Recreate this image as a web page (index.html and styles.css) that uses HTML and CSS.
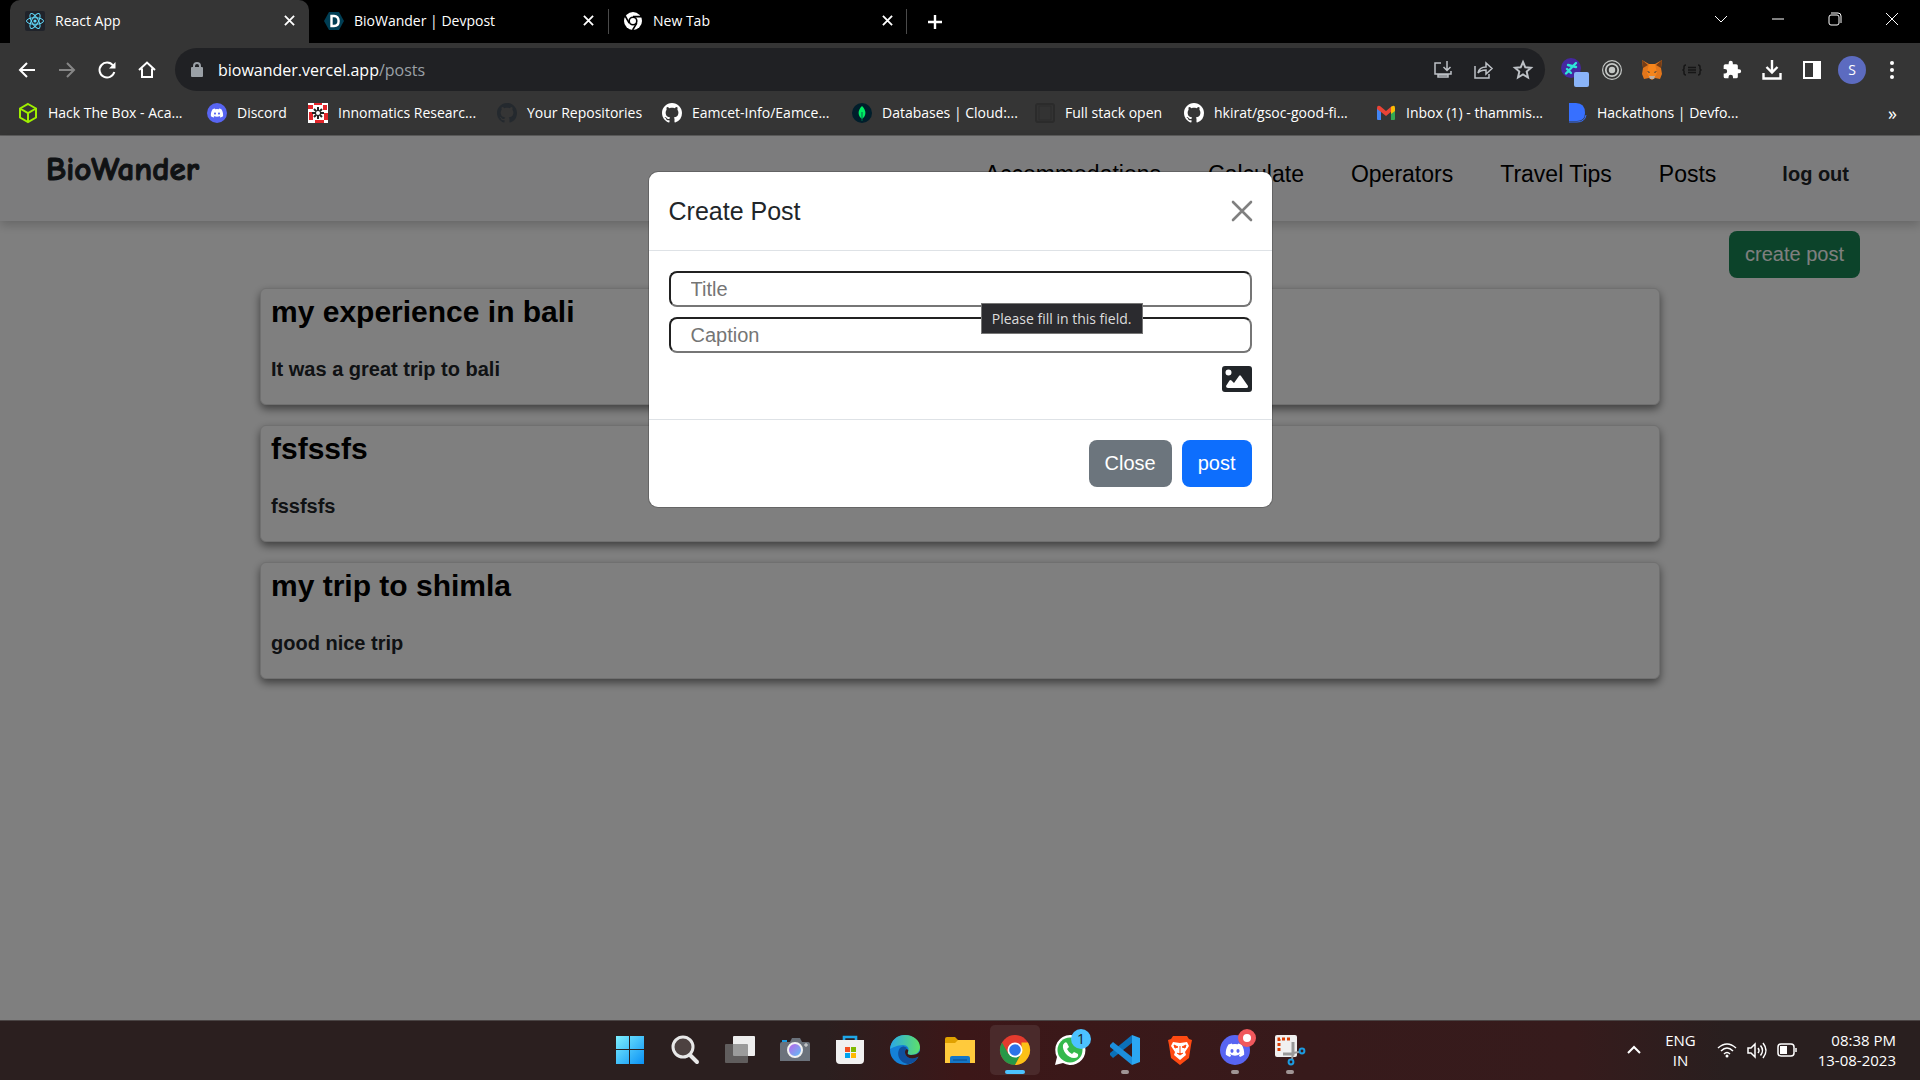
FILE: index.html
```
<!DOCTYPE html>
<html lang="en">
<head>
    <meta charset="UTF-8">
    <meta name="viewport" content="width=device-width, initial-scale=1.0">
    <title>React App</title>
    <link rel="stylesheet" href="styles.css">
</head>
<body>
    <!-- shared icon shapes -->
    <svg class="sprite" aria-hidden="true">
        <symbol id="cross" viewBox="0 0 12 12"><path d="M1 1l10 10M11 1L1 11" fill="none" stroke="currentColor" stroke-width="2"/></symbol>
        <symbol id="github" viewBox="0 0 16 16"><path fill="currentColor" d="M8 0C3.58 0 0 3.58 0 8c0 3.54 2.29 6.53 5.47 7.59.4.07.55-.17.55-.38 0-.19-.01-.82-.01-1.49-2.01.37-2.53-.49-2.69-.94-.09-.23-.48-.94-.82-1.13-.28-.15-.68-.52-.01-.53.63-.01 1.08.58 1.23.82.72 1.21 1.87.87 2.33.66.07-.52.28-.87.51-1.07-1.78-.2-3.64-.89-3.64-3.95 0-.87.31-1.59.82-2.15-.08-.2-.36-1.02.08-2.12 0 0 .67-.21 2.2.82.64-.18 1.32-.27 2-.27s1.36.09 2 .27c1.53-1.04 2.2-.82 2.2-.82.44 1.1.16 1.92.08 2.12.51.56.82 1.27.82 2.15 0 3.07-1.87 3.75-3.65 3.95.29.25.54.73.54 1.48 0 1.07-.01 1.93-.01 2.2 0 .21.15.46.55.38A8.01 8.01 0 0 0 16 8c0-4.42-3.58-8-8-8z"/></symbol>
        <symbol id="discord" viewBox="0 0 20 20"><circle cx="10" cy="10" r="10" fill="#5865f2"/><path fill="#fff" d="M14.4 6.3a9 9 0 0 0-2.3-.7l-.3.6a8 8 0 0 0-3.6 0l-.3-.6a9 9 0 0 0-2.3.7C4 8.700 3.700 11 3.900 13.200a9 9 0 0 0 2.800 1.400l.7-1.100-.9-.5.2-.2a6.600 6.600 0 0 0 6.600 0l.2.2-.9.5.7 1.100a9 9 0 0 0 2.800-1.400c.2-2.500-.4-4.800-1.700-6.900zM8 11.800c-.6 0-1-.5-1-1.200s.4-1.200 1-1.200 1 .5 1 1.200-.4 1.200-1 1.200zm4 0c-.6 0-1-.5-1-1.200s.4-1.200 1-1.200 1 .5 1 1.200-.4 1.200-1 1.200z"/></symbol>
    </svg>

    <header class="browser">
        <div class="tab-strip">
            <div class="tab active">
                <svg class="favicon" viewBox="0 0 20 20"><rect width="20" height="20" rx="2" fill="#20232a"/><g fill="none" stroke="#61dafb"><ellipse cx="10" cy="10" rx="8.500" ry="3.300"/><ellipse cx="10" cy="10" rx="8.500" ry="3.300" transform="rotate(60 10 10)"/><ellipse cx="10" cy="10" rx="8.500" ry="3.300" transform="rotate(120 10 10)"/></g><circle cx="10" cy="10" r="1.600" fill="#61dafb"/></svg>
                <span>React App</span>
                <button type="button" class="tab-close" aria-label="Close tab"><svg><use href="#cross"/></svg></button>
            </div>
            <div class="tab">
                <svg class="favicon" viewBox="0 0 20 20"><path d="M5 1h10l5 9-5 9H5l-5-9z" fill="#003e54"/><path d="M7.500 5v10h2.500c3 0 4.600-2 4.600-5S13 5 10 5z" fill="none" stroke="#fff" stroke-width="2.400"/></svg>
                <span>BioWander | Devpost</span>
                <button type="button" class="tab-close" aria-label="Close tab"><svg><use href="#cross"/></svg></button>
            </div>
            <div class="tab divided">
                <svg class="favicon" viewBox="0 0 20 20"><circle cx="10" cy="10" r="9" fill="#fff"/><circle cx="10" cy="10" r="3.800" fill="#fff" stroke="#000" stroke-width="1.600"/><path d="M10 5.600h8.300M6.200 12.200L2.200 5M13.800 12.200L9.600 19" stroke="#000" stroke-width="1.600"/></svg>
                <span>New Tab</span>
                <button type="button" class="tab-close" aria-label="Close tab"><svg><use href="#cross"/></svg></button>
            </div>
            <button type="button" class="new-tab" aria-label="New tab"><svg viewBox="0 0 16 16"><path d="M8 1v14M1 8h14" stroke="#fff" stroke-width="2.400"/></svg></button>
            <div class="window-controls">
                <button type="button" aria-label="Search tabs"><svg viewBox="0 0 14 14"><path d="M1 4l6 6 6-6"/></svg></button>
                <button type="button" aria-label="Minimize"><svg viewBox="0 0 14 14"><path d="M1 7h12"/></svg></button>
                <button type="button" aria-label="Restore"><svg viewBox="0 0 14 14"><rect x="1" y="3" width="10" height="10" rx="2"/><path d="M3 1h7q3 0 3 3v7"/></svg></button>
                <button type="button" aria-label="Close window"><svg viewBox="0 0 14 14"><path d="M1 1l12 12M13 1L1 13"/></svg></button>
            </div>
        </div>

        <div class="toolbar">
            <div class="tool-group">
                <button type="button" aria-label="Back"><svg viewBox="0 0 20 20" class="line"><path d="M18 10H3M10 3l-7 7 7 7"/></svg></button>
                <button type="button" aria-label="Forward" class="off"><svg viewBox="0 0 20 20" class="line"><path d="M2 10h15M10 3l7 7-7 7"/></svg></button>
                <button type="button" aria-label="Reload"><svg viewBox="0 0 20 20" class="line"><path d="M16 5.500A7.500 7.500 0 1 0 17.300 12"/><path d="M18.500 2v6.500H12z" fill="#fff" stroke="none"/></svg></button>
                <button type="button" aria-label="Home"><svg viewBox="0 0 20 20" class="line"><path d="M2 10l8-7.500L18 10M5 8.500V17h10V8.500"/></svg></button>
            </div>
            <div class="address-bar">
                <svg class="lock" viewBox="0 0 12 16"><rect y="5" width="12" height="10" rx="1" fill="#9aa0a6"/><path d="M3 6V4a3 3 0 0 1 6 0v2" fill="none" stroke="#9aa0a6" stroke-width="2"/></svg>
                <p class="url">biowander.vercel.app<span>/posts</span></p>
                <div class="tool-group dim">
                    <button type="button" aria-label="Install app"><svg viewBox="0 0 20 20" class="line thin"><path d="M8 3H2v11h16v-3M5 17h10v-2H5zM14 1v9M10.500 7l3.500 3.500L17.500 7"/></svg></button>
                    <button type="button" aria-label="Share"><svg viewBox="0 0 20 20" class="line thin"><path d="M2 6v12h14v-4M5 13c1-5 4-6 8-6V3l6 5.500-6 5.500v-4c-4 0-6 .5-8 3z"/></svg></button>
                    <button type="button" aria-label="Bookmark"><svg viewBox="0 0 20 20" class="line"><path d="M10 2l2.300 5.300 5.700.5-4.300 3.800 1.300 5.900-5-3-5 3 1.300-5.900L2 7.800l5.700-.5z"/></svg></button>
                </div>
            </div>
            <div class="tool-group extensions">
                <button type="button" aria-label="Wallet extension"><svg viewBox="0 0 20 20"><circle cx="9" cy="8" r="10" fill="#4527a0"/><path d="M4 13.500L14 3M6 5l8 2M5 9l4 4" stroke="#2ee6d6" stroke-width="2.400" stroke-linecap="round"/><rect x="12" y="12" width="15" height="15" rx="2" fill="#8ab4f8"/></svg></button>
                <button type="button" aria-label="Recorder extension"><svg viewBox="0 0 20 20"><g fill="none" stroke="#c4c7c5"><circle cx="10" cy="10" r="9.400" stroke-width="1.200"/><circle cx="10" cy="10" r="6.200" stroke-width="1.800"/></g><circle cx="10" cy="10" r="3.200" fill="#c4c7c5"/></svg></button>
                <button type="button" aria-label="MetaMask"><svg viewBox="0 0 20 20"><path fill="#e2761b" d="M0 0l7 4h6l7-4-1 8 1 6-2 5-5-1-3 2-3-2-5 1-2-5 1-6z"/><path fill="#763d16" d="M0 0l6 5-5 3zM20 0l-6 5 5 3z"/><path fill="#f6851b" d="M7 4h6l2 9-2 4H7l-2-4z"/><path fill="#233447" d="M5 11l3 1-1 1zM15 11l-3 1 1 1z"/><path fill="#c0ad9e" d="M7 16h6l-1 3H8z"/></svg></button>
                <button type="button" aria-label="JSON viewer"><svg viewBox="0 0 20 20"><path d="M4 5q-2 0-2 2v2l-1 1 1 1v2q0 2 2 2M16 5q2 0 2 2v2l1 1-1 1v2q0 2-2 2M6 7.500h8M6 10h8M6 12.500h8" fill="none" stroke="#161616" stroke-width="1.500"/></svg></button>
                <button type="button" aria-label="Extensions"><svg viewBox="0 0 24 24"><path fill="#fff" d="M20.500 11H19V7a2 2 0 0 0-2-2h-4V3.500a2.500 2.500 0 0 0-5 0V5H4a2 2 0 0 0-2 2v3.800h1.500a2.700 2.700 0 0 1 0 5.400H2V20a2 2 0 0 0 2 2h3.800v-1.500a2.700 2.700 0 0 1 5.400 0V22H17a2 2 0 0 0 2-2v-4h1.500a2.500 2.500 0 0 0 0-5z"/></svg></button>
                <button type="button" aria-label="Downloads"><svg viewBox="0 0 20 20"><path d="M10 0v12M4.500 7l5.500 5.500L15.500 7M1.500 13v5.500h17V13" fill="none" stroke="#fff" stroke-width="2.400"/></svg></button>
                <button type="button" aria-label="Side panel"><svg viewBox="0 0 20 20"><path fill="#fff" fill-rule="evenodd" d="M1 1h18v18H1zM3 3v14h8V3z"/></svg></button>
                <button type="button" class="avatar">S</button>
                <button type="button" aria-label="Menu"><svg viewBox="0 0 20 20" fill="#fff"><circle cx="10" cy="3" r="2"/><circle cx="10" cy="10" r="2"/><circle cx="10" cy="17" r="2"/></svg></button>
            </div>
        </div>

        <nav class="bookmarks" aria-label="Bookmarks">
            <a href="#"><svg viewBox="0 0 20 20"><path d="M10 1l8 4.500v9L10 19l-8-4.500v-9zM2 5.500l8 4.500 8-4.500M10 10v9" fill="none" stroke="#9fef00" stroke-width="2"/></svg>Hack The Box - Aca...</a>
            <a href="#"><svg><use href="#discord"/></svg>Discord</a>
            <a href="#"><svg viewBox="0 0 20 20"><rect width="20" height="20" fill="#fff"/><path d="M0 2h5v4H0zM1 9h4v8H1zM6 0h8v2H6zM15 2h4v5h-4zM16 10h4v7h-4zM7 17h9v3H7z" fill="#e3262b"/><path d="M10 4v12M4 10h12M6 6l8 8M14 6l-8 8" stroke="#222" stroke-width="2"/><circle cx="10" cy="10" r="2" fill="#fff"/></svg>Innomatics Researc...</a>
            <a href="#"><svg class="faded"><use href="#github"/></svg>Your Repositories</a>
            <a href="#"><svg><use href="#github"/></svg>Eamcet-Info/Eamce...</a>
            <a href="#"><svg viewBox="0 0 20 20"><circle cx="10" cy="10" r="10" fill="#001e2b"/><path d="M10 3c5 5 4 10 0 13-4-3-5-8 0-13z" fill="#00ed64"/><path d="M10 9v9" stroke="#00684a"/></svg>Databases | Cloud:...</a>
            <a href="#"><svg viewBox="0 0 20 20"><rect x="1" y="1" width="18" height="18" rx="2" fill="#333" stroke="#2b2b2b" stroke-width="2"/><rect x="4" y="3" width="12" height="14" fill="none" stroke="#2d2d2d"/></svg>Full stack open</a>
            <a href="#"><svg><use href="#github"/></svg>hkirat/gsoc-good-fi...</a>
            <a href="#"><svg viewBox="0 0 20 20"><path fill="#4285f4" d="M1 5h4v12H2q-1 0-1-1z"/><path fill="#34a853" d="M15 7h4v9q0 1-1 1h-3z"/><path fill="#ea4335" d="M1 5q0-3 3-2l6 5 6-5v5l-6 5-5-4-4-3z"/><path fill="#fbbc04" d="M15 4q4-3 4 1v3l-4 3z"/></svg>Inbox (1) - thammis...</a>
            <a href="#"><svg viewBox="0 0 20 20"><path d="M2 0h7q9 0 9 10 0 8-8 8H2z" fill="#3770ff"/><path d="M2 19h8q8 0 9-7" fill="none" stroke="#3770ff"/></svg>Hackathons | Devfo...</a>
            <button type="button" class="more" aria-label="More bookmarks">»</button>
        </nav>
    </header>

    <main class="page">
        <div class="navbar">
            <a href="#" class="brand">BioWander</a>
            <nav class="nav-links">
                <a href="#">Accommodations</a>
                <a href="#">Calculate</a>
                <a href="#">Operators</a>
                <a href="#">Travel Tips</a>
                <a href="#">Posts</a>
                <button type="button" class="logout">log out</button>
            </nav>
        </div>
        <div class="actions">
            <button type="button" class="btn btn-success">create post</button>
        </div>
        <section class="posts">
            <article class="post">
                <h2>my experience in bali</h2>
                <p>It was a great trip to bali</p>
            </article>
            <article class="post">
                <h2>fsfssfs</h2>
                <p>fssfsfs</p>
            </article>
            <article class="post">
                <h2>my trip to shimla</h2>
                <p>good nice trip</p>
            </article>
        </section>

        <div class="backdrop">
            <form class="modal" role="dialog" aria-labelledby="modal-title">
                <div class="modal-header">
                    <h1 id="modal-title">Create Post</h1>
                    <button type="button" class="btn-close" aria-label="Close"><svg viewBox="0 0 20 20"><path d="M1 1l18 18M19 1L1 19" fill="none" stroke="#808080" stroke-width="2.600" stroke-linecap="round"/></svg></button>
                </div>
                <div class="modal-body">
                    <div class="field">
                        <input type="text" placeholder="Title" aria-label="Title" required>
                        <span class="tooltip" role="tooltip">Please fill in this field.</span>
                    </div>
                    <div class="field">
                        <input type="text" placeholder="Caption" aria-label="Caption" required>
                    </div>
                    <button type="button" class="add-image" aria-label="Add image"><svg viewBox="0 0 30 26"><path fill="#212529" fill-rule="evenodd" d="M3 0h24q3 0 3 3v20q0 3-3 3H3q-3 0-3-3V3q0-3 3-3zM6.500 3.500a3 3 0 1 0 0 6 3 3 0 0 0 0-6zM4 20q0 2 2 2h18.500q2 0 1.500-2L19 10q-1-1.500-2 0l-5 7-2.500-2.500q-1-1-2 0z"/></svg></button>
                </div>
                <div class="modal-footer">
                    <button type="button" class="btn btn-secondary">Close</button>
                    <button type="submit" class="btn btn-primary">post</button>
                </div>
            </form>
        </div>
    </main>

    <footer class="taskbar">
        <div class="apps">
            <button type="button" aria-label="Start"><svg viewBox="0 0 30 30"><defs><linearGradient id="win" x2="1" y2="1"><stop stop-color="#7df0ff"/><stop offset="1" stop-color="#0a91f5"/></linearGradient></defs><path fill="url(#win)" d="M1 1h13v13H1zM15 1h14v13H15zM1 15h13v14H1zM15 15h14v14H15z"/></svg></button>
            <button type="button" aria-label="Search"><svg viewBox="0 0 30 30"><circle cx="13" cy="12" r="10" fill="#4d4241" stroke="#e8e8e8" stroke-width="3"/><path d="M20 20l7 7" stroke="#e8e8e8" stroke-width="4" stroke-linecap="round"/></svg></button>
            <button type="button" aria-label="Task view"><svg viewBox="0 0 30 30"><rect x="8" y="1" width="22" height="20" rx="1" fill="#eee"/><rect x="0" y="9" width="23" height="19" rx="1" fill="#777" fill-opacity=".7"/></svg></button>
            <button type="button" aria-label="Camera"><svg viewBox="0 0 30 30"><defs><linearGradient id="lens" x2="1" y2="1"><stop stop-color="#c25be8"/><stop offset="1" stop-color="#56c8f5"/></linearGradient></defs><path d="M2 7V5h5v2z" fill="#1c9be0"/><path d="M2 7h8l2-4h8l2 4h6q2 0 2 2v17H0V9q0-2 2-2z" fill="#6b727b"/><circle cx="15" cy="15" r="7" fill="url(#lens)" stroke="#f1f1f1" stroke-width="2"/><path d="M26 8v4M24 10h4" stroke="#ddd"/></svg></button>
            <button type="button" aria-label="Store"><svg viewBox="0 0 30 30"><path d="M9 6V2h12v4" fill="none" stroke="#1fa7e8" stroke-width="2.600"/><path d="M1 5h28v20q0 4-4 4H5q-4 0-4-4z" fill="#f1f1f1"/><path fill="#f25022" d="M10 12h5v5h-5z"/><path fill="#7fba00" d="M16 12h5v5h-5z"/><path fill="#00a4ef" d="M10 18h5v5h-5z"/><path fill="#ffb900" d="M16 18h5v5h-5z"/></svg></button>
            <button type="button" aria-label="Edge"><svg viewBox="0 0 30 30"><defs><linearGradient id="edge"><stop stop-color="#2aa8e8"/><stop offset="1" stop-color="#5ee06a"/></linearGradient></defs><circle cx="15" cy="15" r="15" fill="#1481d8"/><path d="M0 14C1 5 7 0 15 0c9 0 15 6 15 12 0 5-4 8-9 8-3 0-4-1-3-3 2-4-1-7-5-7-6 0-11 3-13 4z" fill="url(#edge)"/><path d="M10 13c-5 7 1 16 9 16 4-1 7-3 9-7-6 3-13 1-13-5 0-2 1-3 2-4-3-2-5-2-7 0z" fill="#0f4f9e"/><path d="M18 17c-1 2 0 3 3 3 4 0 7-1 9-4v5l-2 1c-6 3-13 1-13-5 0-2 1-3 2-3q2 1 1 3z" fill="#3a1819"/></svg></button>
            <button type="button" aria-label="File Explorer"><svg viewBox="0 0 30 30"><path d="M0 4q0-2 2-2h8l3 3v5H0z" fill="#e0a100"/><path d="M0 8h10l3-3h17v23H0z" fill="#ffca3c"/><path d="M5 28v-5q0-2 2-2h16q2 0 2 2v5z" fill="#1477c8"/><path d="M8 25h14" stroke="#0b4b86"/></svg></button>
            <button type="button" class="current" aria-label="Chrome"><svg viewBox="0 0 30 30"><circle cx="15" cy="15" r="15" fill="#e33b2e"/><path d="M2 7.500a15 15 0 0 0 13 22.500l6.500-11.500L8.500 19z" fill="#279847"/><path d="M28 7.500a15 15 0 0 1-13 22.500L21.500 18V7.500z" fill="#fbc116"/><circle cx="15" cy="15" r="7.500" fill="#fff"/><circle cx="15" cy="15" r="5.800" fill="#2c73e8"/></svg></button>
            <button type="button" aria-label="WhatsApp"><svg viewBox="0 0 30 30"><path d="M15 0a15 15 0 1 1-7 28l-8 2 2-8A15 15 0 0 1 15 0z" fill="#fff"/><circle cx="15" cy="15" r="12.500" fill="#34b94d"/><path d="M8 10q2-4 4-2l2 4-2 2q2 4 5 5l2-2 4 2q1 4-4 4C13 23 7 16 8 10z" fill="#fff"/></svg><span class="badge">1</span></button>
            <button type="button" class="open" aria-label="VS Code"><svg viewBox="0 0 30 30"><path d="M22 0l8 3v24l-8 3z" fill="#2ba7f2"/><path d="M22 0v8L3 23l-3-3v-2z" fill="#0b70b8"/><path d="M22 30v-8L3 7l-3 3v2z" fill="#1c8fdd"/></svg></button>
            <button type="button" aria-label="Brave"><svg viewBox="0 0 30 30"><path d="M8 1h14l2 3 3 1-1 5-2 13-9 7-9-7L4 10 3 5l3-1z" fill="#ff4a12"/><path d="M8 7l7 1 7-1 2 4-4 6 1 3-6 5-6-5 1-3-4-6z" fill="#fff"/><path d="M9 10l4 2-3 1zM21 10l-4 2 3 1zM15 11v7M12 18l3 2 3-2" fill="#ff4a12" stroke="#ff4a12"/></svg></button>
            <button type="button" class="open" aria-label="Discord"><svg><use href="#discord"/></svg><span class="badge alert"></span></button>
            <button type="button" class="open" aria-label="Snipping Tool"><svg viewBox="0 0 30 30"><rect y="0" width="22" height="22" rx="2" fill="#f0f0f0"/><path d="M4 16V4h12" fill="none" stroke="#d83b01" stroke-width="3" stroke-dasharray="3 2"/><path d="M8 19h10V7" fill="none" stroke="#999" stroke-width="3"/><path d="M18 18l6-1M18 18l-1 6" stroke="#999" stroke-width="2"/><circle cx="27" cy="16" r="2.400" fill="none" stroke="#1c9be0" stroke-width="2"/><circle cx="16" cy="27" r="2.400" fill="none" stroke="#1c9be0" stroke-width="2"/></svg></button>
        </div>
        <div class="tray">
            <svg viewBox="0 0 20 20" class="line"><path d="M4 13l6-6 6 6"/></svg>
            <p class="lang">ENG<br>IN</p>
            <div class="status">
                <svg viewBox="0 0 20 20" class="line thin"><path d="M1 8q9-8 18 0M4 11q6-6 12 0M7 14q3-3 6 0"/><circle cx="10" cy="16" r="1.500" fill="#fff" stroke="none"/></svg>
                <svg viewBox="0 0 20 20" class="line thin"><path d="M1 8v5h3l4 4V4L4 8zM11 8q2 2.500 0 5M13.500 5.500q4 5 0 10M16 3q6 7.500 0 15"/></svg>
                <svg viewBox="0 0 20 20" class="line thin"><rect x="1" y="4" width="16" height="12" rx="3"/><rect x="3" y="6" width="7" height="8" fill="#fff" stroke="none"/><path d="M19 8v4"/></svg>
            </div>
            <p class="clock">08:38 PM<br>13-08-2023</p>
        </div>
    </footer>
</body>
</html>
```
FILE: styles.css
```
* {
    box-sizing: border-box;
}

body {
    display: flex;
    flex-direction: column;
    min-height: 100vh;
    margin: 0;
    font-family: "Segoe UI", "Open Sans", sans-serif;
    font-size: 14px;
    color: #ffffff;
    background-color: #ffffff;
}

button {
    border: none;
    padding: 0;
    background: none;
    color: inherit;
    font: inherit;
    cursor: pointer;
}

a {
    color: inherit;
    text-decoration: none;
}

h1, h2, p {
    margin: 0;
}

svg {
    display: block;
    flex: none;
    width: 20px;
    height: 20px;
    overflow: visible;
}

.sprite {
    position: absolute;
    width: 0;
    height: 0;
}

.line {
    fill: none;
    stroke: currentColor;
    stroke-width: 2;
}

.thin {
    stroke-width: 1.5;
}

/* browser chrome */
.browser {
    background-color: #353535;
    border-bottom: 1px solid #5c5c5c;
}

.tab-strip {
    display: flex;
    height: 43px;
    padding-left: 10px;
    background-color: #000000;
}

.tab {
    display: flex;
    align-items: center;
    gap: 10px;
    width: 299px;
    padding: 0 14px 2px 15px;
}

.tab.active {
    border-radius: 10px 10px 0 0;
    background-color: #353535;
}

.tab.divided {
    background: linear-gradient(#4a4a4a, #4a4a4a) left / 1px 25px no-repeat, linear-gradient(#4a4a4a, #4a4a4a) right / 1px 25px no-repeat;
}

.tab span {
    flex: 1;
}

.tab-close svg {
    width: 11px;
    height: 11px;
}

.new-tab {
    width: 56px;
}

.new-tab svg {
    width: 16px;
    height: 16px;
    margin: 0 auto;
}

.window-controls {
    display: flex;
    margin-left: auto;
}

.window-controls button {
    width: 57px;
    height: 38px;
}

.window-controls svg {
    width: 14px;
    height: 14px;
    margin: 0 auto;
    fill: none;
    stroke: #ffffff;
}

.toolbar {
    display: flex;
    align-items: center;
    height: 53px;
    padding: 0 8px 0 7px;
}

.tool-group {
    display: flex;
    align-items: center;
}

.tool-group button {
    display: flex;
    justify-content: center;
    width: 40px;
}

.tool-group .off {
    color: #868686;
}

.address-bar {
    display: flex;
    align-items: center;
    flex: 1;
    height: 43px;
    margin: 0 7px 0 8px;
    padding: 0 2px 0 16px;
    border-radius: 22px;
    background-color: #202124;
}

.lock {
    width: 12px;
    height: 16px;
}

.url {
    flex: 1;
    margin-left: 15px;
    font-size: 16px;
}

.url span {
    color: #9aa0a6;
}

.dim {
    color: #bdc1c6;
}

.tool-group .avatar {
    width: 28px;
    height: 28px;
    margin: 0 6px;
    border-radius: 50%;
    background-color: #5c6bc0;
    line-height: 28px;
}

.bookmarks {
    display: grid;
    grid-template-columns: 189px 101px 189px 165px 190px 183px 149px 192px 191px 1fr auto;
    align-items: center;
    height: 39px;
    padding: 0 23px 6px 18px;
}

.bookmarks a {
    display: flex;
    align-items: center;
    gap: 10px;
    white-space: nowrap;
}

.faded {
    color: #24292e;
}

.more {
    font-size: 18px;
}

/* app page, under the modal backdrop */
.page {
    position: relative;
    flex: 1;
    font-family: "Liberation Sans", Arial, sans-serif;
    font-size: 20px;
    color: #212529;
}

.navbar {
    display: flex;
    justify-content: space-between;
    align-items: flex-start;
    height: 85px;
    padding: 13px 71px 0 46px;
    background-color: #f8f9fa;
    box-shadow: 0 4px 10px rgba(0, 0, 0, 0.2);
}

.brand {
    font-family: "Comic Sans MS", "Comic Neue", Lato, sans-serif;
    font-size: 33px;
    font-weight: bold;
    line-height: 40px;
    -webkit-text-stroke: 1px #212529;
}

.nav-links {
    display: flex;
    align-items: center;
    gap: 47px;
    padding-top: 10px;
    color: #000000;
    font-size: 23px;
    line-height: 30px;
}

.logout {
    margin-left: 19px;
    color: #212529;
    font-size: 20px;
    font-weight: bold;
}

.actions {
    display: flex;
    justify-content: flex-end;
    padding: 10px 60px;
}

.btn {
    height: 47px;
    padding: 0 16px;
    border-radius: 8px;
    color: #ffffff;
    font-size: 20px;
}

.btn-success {
    background-color: #198754;
}

.btn-secondary {
    background-color: #6c757d;
}

.btn-primary {
    background-color: #0d6efd;
}

.posts {
    display: flex;
    flex-direction: column;
    gap: 20px;
    width: 73%;
    max-width: 1400px;
    margin: 0 auto;
}

.post {
    height: 117px;
    padding: 4px 10px;
    border: 1px solid #e0e0e0;
    border-radius: 6px;
    box-shadow: 0 4px 8px rgba(0, 0, 0, 0.5);
    background-color: #ffffff;
    font-weight: bold;
}

.post h2 {
    margin-bottom: 23px;
    color: #000000;
    font-size: 30px;
    line-height: 38px;
}

.post p {
    line-height: 30px;
}

.backdrop {
    position: absolute;
    inset: 0;
    padding-top: 36px;
    background-color: rgba(0, 0, 0, 0.5);
}

.modal {
    width: 623px;
    margin: 0 auto;
    border-radius: 9px;
    box-shadow: 0 0 0 1px rgba(0, 0, 0, 0.2);
    background-color: #ffffff;
}

.modal-header {
    display: flex;
    justify-content: space-between;
    align-items: center;
    height: 79px;
    padding: 0 20px;
    border-bottom: 1px solid #dee2e6;
}

.modal-header h1 {
    font-size: 25px;
    font-weight: normal;
}

.modal-body {
    display: flex;
    flex-direction: column;
    gap: 10px;
    padding: 20px 20px 27px;
}

.field {
    position: relative;
}

.field input {
    display: block;
    width: 100%;
    height: 36px;
    padding: 0 20px;
    border: 2px solid;
    border-color: #212121 #767676 #767676 #212121;
    border-radius: 8px;
    background-color: #ffffff;
    font: inherit;
}

.field input::placeholder {
    color: #757575;
}

.tooltip {
    position: absolute;
    z-index: 1;
    top: 32px;
    right: 109px;
    padding: 0 10px;
    border: 1px solid #767676;
    background-color: #2b2b2f;
    color: #dddddd;
    font-family: "Segoe UI", "Open Sans", sans-serif;
    font-size: 14px;
    line-height: 29px;
    white-space: nowrap;
}

.add-image {
    align-self: flex-end;
    padding-top: 3px;
}

.add-image svg {
    width: 30px;
    height: 26px;
}

.modal-footer {
    display: flex;
    justify-content: flex-end;
    gap: 10px;
    padding: 20px;
    border-top: 1px solid #dee2e6;
}

/* taskbar */
.taskbar {
    display: grid;
    grid-template-columns: 1fr auto 1fr;
    align-items: center;
    height: 60px;
    padding-bottom: 2px;
    border-top: 1px solid #4a4444;
    background: linear-gradient(90deg, #2b1f1f 0%, #2b1f1f 43%, #3c1718 50%, #371a1b 68%, #361b1c 82%, #291f1f 90%, #291f1f 100%);
}

.apps {
    display: flex;
    grid-column: 2;
    gap: 5px;
}

.apps button {
    position: relative;
    display: flex;
    justify-content: center;
    align-items: center;
    width: 50px;
    height: 50px;
    border-radius: 5px;
}

.apps svg {
    width: 30px;
    height: 30px;
}

.apps .current {
    background-color: #4a2a2b;
}

.apps .open::after,
.apps .current::after {
    content: "";
    position: absolute;
    bottom: 1px;
    width: 8px;
    height: 4px;
    border-radius: 2px;
    background-color: #a09595;
}

.apps .current::after {
    width: 20px;
    background-color: #4cc2ff;
}

.badge {
    position: absolute;
    top: 4px;
    right: 4px;
    width: 20px;
    height: 20px;
    border-radius: 50%;
    background-color: #4cc2ff;
    color: #1a1a1a;
    line-height: 20px;
}

.alert {
    width: 18px;
    height: 18px;
    border: 5px solid #f0585c;
    background-color: #ffffff;
}

.tray {
    display: flex;
    justify-content: flex-end;
    align-items: center;
    gap: 21px;
    padding-right: 24px;
    font-size: 15px;
    line-height: 20px;
}

.lang {
    text-align: center;
}

.status {
    display: flex;
    gap: 10px;
}

.clock {
    text-align: right;
}
```
